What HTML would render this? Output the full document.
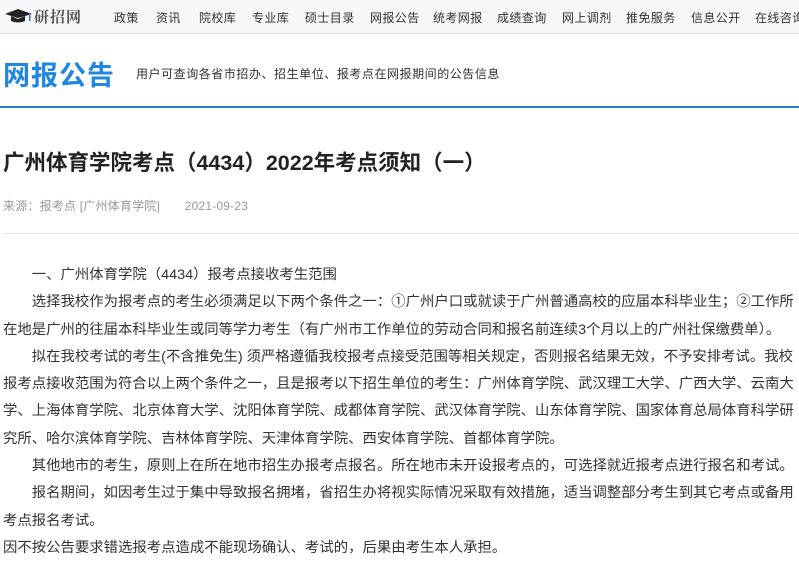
<!DOCTYPE html>
<html><head><meta charset="utf-8"><style>
*{margin:0;padding:0;box-sizing:border-box}
body{width:799px;height:558px;overflow:hidden;background:#fff;font-family:"Liberation Sans","Noto Sans CJK SC",sans-serif;color:#333;position:relative}
.nav{position:absolute;left:0;top:0;width:799px;height:34px;background:#f6f7f9;border-bottom:1px solid #ddd}
.logo{position:absolute;left:4px;top:6px;font-family:"Noto Serif CJK SC",serif;font-weight:bold;font-size:15px;color:#555;letter-spacing:1px}
.nav span.i{position:absolute;top:9px;font-size:12px;letter-spacing:0.4px;color:#333;white-space:nowrap}
.hd{position:absolute;left:3px;top:54px;font-size:27px;font-weight:bold;color:#1f87e0;letter-spacing:1px}
.sub{position:absolute;left:136px;top:65px;font-size:12px;letter-spacing:0.55px;color:#333;white-space:nowrap}
.bl{position:absolute;left:0;top:106px;width:799px;height:2px;background:#2a7fc4}
.t{position:absolute;left:3px;top:146px;font-size:21.5px;font-weight:bold;color:#222;white-space:nowrap}
.src{position:absolute;left:3px;top:197px;font-size:12px;letter-spacing:0.2px;color:#999;white-space:nowrap}
.hr{position:absolute;left:3px;top:233px;width:796px;height:1px;background:#e5e5e5}
.c{position:absolute;left:3px;top:261px;font-size:14px;line-height:27.3px;white-space:nowrap;color:#333;transform:scaleX(1.027);transform-origin:0 0}
</style></head><body>
<div class="nav">
<div class="logo"><svg width="30" height="16" viewBox="0 0 30 16" style="vertical-align:-2px"><path d="M1 6 L14 1 L28 6 L14 10 Z" fill="#222"/><path d="M7 8 L7 13 Q14 16 21 13 L21 8 L14 11 Z" fill="#222"/><rect x="25" y="6" width="1.5" height="7" fill="#2a7fc4"/></svg>研招网</div>
<span class="i" style="left:114px">政策</span>
<span class="i" style="left:156px">资讯</span>
<span class="i" style="left:199px">院校库</span>
<span class="i" style="left:252px">专业库</span>
<span class="i" style="left:305px">硕士目录</span>
<span class="i" style="left:370px">网报公告</span>
<span class="i" style="left:433px">统考网报</span>
<span class="i" style="left:497px">成绩查询</span>
<span class="i" style="left:562px">网上调剂</span>
<span class="i" style="left:626px">推免服务</span>
<span class="i" style="left:691px">信息公开</span>
<span class="i" style="left:755px">在线咨询</span>
</div>
<div class="hd">网报公告</div>
<div class="sub">用户可查询各省市招办、招生单位、报考点在网报期间的公告信息</div>
<div class="bl"></div>
<div class="t">广州体育学院考点（4434）2022年考点须知（一）</div>
<div class="src">来源：报考点 [广州体育学院]&nbsp;&nbsp;&nbsp;&nbsp;&nbsp;&nbsp;&nbsp;2021-09-23</div>
<div class="hr"></div>
<div class="c">
&emsp;&emsp;一、广州体育学院（4434）报考点接收考生范围<br>
&emsp;&emsp;选择我校作为报考点的考生必须满足以下两个条件之一：①广州户口或就读于广州普通高校的应届本科毕业生；②工作所<br>
在地是广州的往届本科毕业生或同等学力考生（有广州市工作单位的劳动合同和报名前连续3个月以上的广州社保缴费单）。<br>
&emsp;&emsp;拟在我校考试的考生(不含推免生) 须严格遵循我校报考点接受范围等相关规定，否则报名结果无效，不予安排考试。我校<br>
报考点接收范围为符合以上两个条件之一，且是报考以下招生单位的考生：广州体育学院、武汉理工大学、广西大学、云南大<br>
学、上海体育学院、北京体育大学、沈阳体育学院、成都体育学院、武汉体育学院、山东体育学院、国家体育总局体育科学研<br>
究所、哈尔滨体育学院、吉林体育学院、天津体育学院、西安体育学院、首都体育学院。<br>
&emsp;&emsp;其他地市的考生，原则上在所在地市招生办报考点报名。所在地市未开设报考点的，可选择就近报考点进行报名和考试。<br>
&emsp;&emsp;报名期间，如因考生过于集中导致报名拥堵，省招生办将视实际情况采取有效措施，适当调整部分考生到其它考点或备用<br>
考点报名考试。<br>
因不按公告要求错选报考点造成不能现场确认、考试的，后果由考生本人承担。
</div>
</body></html>
